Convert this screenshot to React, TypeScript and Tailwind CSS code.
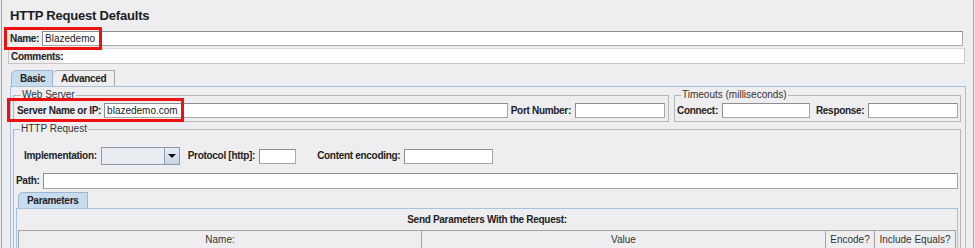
import React from "react";

const lbl = "text-[10px] font-bold tracking-[-0.3px] leading-[12px] text-[#222] whitespace-nowrap";

function Field({ className = "", children }: { className?: string; children?: React.ReactNode }) {
  return (
    <div
      className={
        "h-[15px] bg-white border border-[#a7a7a7] border-t-[#8e8e8e] border-l-[#8e8e8e] text-[10px] leading-[13px] pl-[2px] text-[#222] whitespace-nowrap overflow-hidden " +
        className
      }
    >
      {children}
    </div>
  );
}

export default function App() {
  return (
    <div className="relative w-[975px] h-[248px] overflow-hidden bg-[#eeeef0] font-['Liberation_Sans',Arial,sans-serif]">
      <div className="ml-[1px] w-[973px] h-full border-l border-r border-[#a3a3a3] flex flex-col">
        {/* Title */}
        <div className="shrink-0 h-[28px] pl-[8px] pt-[8px] text-[13px] font-bold leading-[16px] tracking-[-0.2px] text-[#1c1c1c]">
          HTTP Request Defaults
        </div>

        {/* Name */}
        <div className="shrink-0 mt-[2px] ml-[6px] w-[955px] h-[16px] flex items-center">
          <div className={lbl + " w-[34px] pl-[2px] pt-[1px]"}>Name:</div>
          <Field className="flex-1">Blazedemo</Field>
        </div>

        {/* Comments */}
        <div className="shrink-0 mt-[2px] ml-[6px] w-[957px] h-[16px] flex items-stretch border border-[#c6c6c6] border-t-[#d9d9d9]">
          <div className={lbl + " w-[54px] pl-[2px] pt-[2px]"}>Comments:</div>
          <div className="flex-1 bg-white" />
        </div>

        {/* Tabs */}
        <div className="shrink-0 mt-[6px] ml-[9px] h-[16px] flex items-stretch">
          <div className="w-[42px] bg-[#c8dcef] border border-b-0 border-[#9fb5cf] rounded-tl-[5px] text-[10px] font-bold tracking-[-0.3px] leading-[15px] text-[#222] pl-[8px]">
            Basic
          </div>
          <div className="w-[62px] bg-[#eeeef0] border border-b-0 border-l-0 border-[#a8a8a8] rounded-tl-[5px] text-[10px] font-bold tracking-[-0.3px] leading-[15px] text-[#222] pl-[8px]">
            Advanced
          </div>
        </div>

        {/* Tab panel */}
        <div className="flex-1 min-h-0 ml-[8px] w-[956px] border-l border-t border-r border-[#a9c1dc] flex flex-col">
          {/* Row 1 */}
          <div className="shrink-0 pt-[2px] pl-[2px] flex gap-[5px]">
            <fieldset className="w-[656px] border border-[#b6b6b6] px-[3px] pb-[3px]">
              <legend className="ml-[4px] px-[1px] text-[10px] leading-[12px] text-[#333]">Web Server</legend>
              <div className="mt-[2px] h-[15px] flex items-center">
                <div className={lbl}>Server Name or IP:</div>
                <Field className="ml-[3px] flex-1">blazedemo.com</Field>
                <div className={lbl + " ml-[3px]"}>Port Number:</div>
                <Field className="ml-[4px] w-[90px]" />
              </div>
            </fieldset>
            <fieldset className="w-[287px] border border-[#b6b6b6] pl-[2px] pr-[2px] pb-[3px]">
              <legend className="ml-[4px] px-[1px] text-[10px] leading-[12px] text-[#333]">Timeouts (milliseconds)</legend>
              <div className="mt-[2px] h-[15px] flex items-center">
                <div className={lbl}>Connect:</div>
                <Field className="ml-[4px] w-[88px]" />
                <div className={lbl + " ml-[6px]"}>Response:</div>
                <Field className="ml-[4px] flex-1" />
              </div>
            </fieldset>
          </div>

          {/* HTTP Request */}
          <fieldset className="shrink-0 mt-[1px] ml-[2px] w-[948px] border border-[#b6b6b6] px-[2px] pb-[4px]">
            <legend className="ml-[4px] px-[1px] text-[10px] leading-[12px] text-[#333]">HTTP Request</legend>
            <div className="mt-[12px] pl-[8px] h-[18px] flex items-center">
              <div className={lbl}>Implementation:</div>
              <div className="ml-[4px] h-[18px] flex">
                <div className="w-[63px] bg-[#e9edf2] border border-[#8d9bab] border-r-0" />
                <div className="w-[16px] border border-[#8d9bab] bg-gradient-to-b from-[#e4edf6] to-[#c6d6e8] flex items-center justify-center">
                  <div className="w-0 h-0 border-l-[4px] border-r-[4px] border-t-[4px] border-l-transparent border-r-transparent border-t-[#111]" />
                </div>
              </div>
              <div className={lbl + " ml-[8px]"}>Protocol [http]:</div>
              <Field className="ml-[4px] w-[37px]" />
              <div className={lbl + " ml-[21px]"}>Content encoding:</div>
              <Field className="ml-[4px] w-[89px]" />
            </div>
            <div className="mt-[8px] h-[16px] flex items-center">
              <div className={lbl + " w-[27px]"}>Path:</div>
              <Field className="flex-1 h-[16px]" />
            </div>
            {/* Parameters tab */}
            <div className="mt-[3px] ml-[2px] h-[16px] flex">
              <div className="w-[70px] bg-[#c8dcef] border border-b-0 border-[#9fb5cf] rounded-tl-[5px] text-[10px] font-bold tracking-[-0.3px] leading-[15px] text-[#222] pl-[8px]">
                Parameters
              </div>
            </div>
            <div className="border-l border-t border-r border-[#a9c1dc] px-[1px]">
              <div className="h-[21px] flex items-center justify-center text-[10px] font-bold tracking-[-0.3px] text-[#222]">
                Send Parameters With the Request:
              </div>
              <div className="flex h-[18px] border-t border-l border-[#a3a3a3] text-[10px] leading-[17px] text-[#333]">
                <div className="w-[403px] border-r border-[#a3a3a3] text-center">Name:</div>
                <div className="w-[404px] border-r border-[#a3a3a3] text-center">Value</div>
                <div className="w-[49px] border-r border-[#a3a3a3] text-center">Encode?</div>
                <div className="flex-1 border-r border-[#a3a3a3] text-center">Include Equals?</div>
              </div>
            </div>
          </fieldset>
        </div>
      </div>

      {/* Red annotation boxes */}
      <div className="absolute left-[4px] top-[27px] w-[98px] h-[23px] border-[3px] border-[#ee1111]" />
      <div className="absolute left-[7px] top-[98px] w-[177px] h-[24px] border-[3px] border-[#ee1111]" />
    </div>
  );
}
